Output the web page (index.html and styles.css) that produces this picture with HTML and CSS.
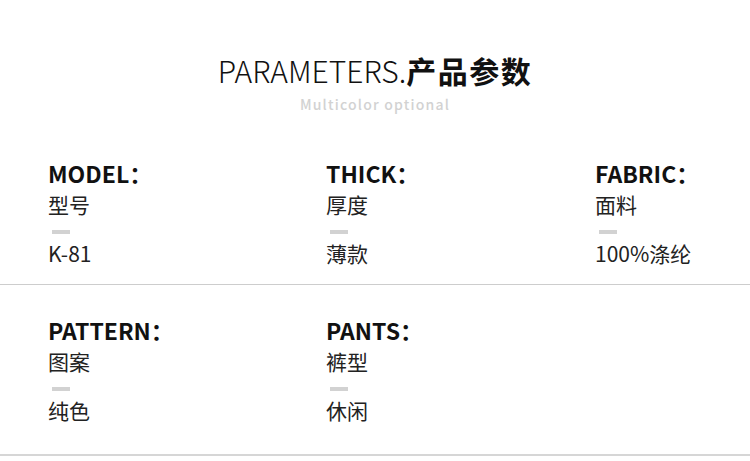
FILE: index.html
```html
<!DOCTYPE html>
<html lang="zh-CN">
<head>
<meta charset="utf-8">
<title>Parameters</title>
<link rel="stylesheet" href="styles.css">
</head>
<body>
<div class="page">
  <header class="head">
    <h1 class="title"><span class="title-en">PARAMETERS.</span><span class="title-cn">产品参数</span></h1>
    <p class="subtitle">Multicolor optional</p>
  </header>

  <section class="row row-first">
    <div class="item">
      <div class="label">MODEL：</div>
      <div class="cn">型号</div>
      <div class="dash"></div>
      <div class="value">K-81</div>
    </div>
    <div class="item">
      <div class="label">THICK：</div>
      <div class="cn">厚度</div>
      <div class="dash"></div>
      <div class="value">薄款</div>
    </div>
    <div class="item">
      <div class="label">FABRIC：</div>
      <div class="cn">面料</div>
      <div class="dash"></div>
      <div class="value">100%涤纶</div>
    </div>
  </section>
  <div class="rule"></div>

  <section class="row row-second">
    <div class="item">
      <div class="label">PATTERN：</div>
      <div class="cn">图案</div>
      <div class="dash"></div>
      <div class="value">纯色</div>
    </div>
    <div class="item">
      <div class="label">PANTS：</div>
      <div class="cn">裤型</div>
      <div class="dash"></div>
      <div class="value">休闲</div>
    </div>
  </section>
  <div class="rule rule-bottom"></div>
</div>
</body>
</html>
```

FILE: styles.css
```css
* { box-sizing: border-box; }
html, body {
  margin: 0;
  padding: 0;
  background: #ffffff;
}
body {
  font-family: "Noto Sans CJK SC", "Noto Sans", sans-serif;
  color: #111;
}
.page {
  width: 750px;
  height: 461px;
  overflow: hidden;
}
.head {
  padding-top: 55px;
  display: flex;
  flex-direction: column;
  align-items: center;
}
.title {
  margin: 0;
  font-size: 30px;
  line-height: 30px;
  font-weight: 300;
  color: #111;
  white-space: nowrap;
}
.title-en {
  font-weight: 300;
}
.title-cn {
  font-weight: 700;
  letter-spacing: 1.5px;
}
.subtitle {
  margin: 11px 0 0;
  font-size: 14px;
  line-height: 16px;
  font-weight: 500;
  letter-spacing: 1.2px;
  color: #d2d2d2;
}
.row {
  display: grid;
  grid-template-columns: 278px 269px 1fr;
  padding-left: 48px;
}
.row-first {
  margin-top: 46px;
}
.row-second {
  margin-top: 30px;
}
.item {
  display: flex;
  flex-direction: column;
  align-items: flex-start;
}
.label {
  font-size: 23px;
  line-height: 31px;
  font-weight: 700;
  color: #111;
  white-space: nowrap;
}
.cn {
  margin-top: 1px;
  font-size: 21px;
  line-height: 28px;
  font-weight: 400;
  color: #222;
}
.dash {
  margin-top: 12px;
  margin-left: 4px;
  width: 18px;
  height: 4px;
  background: #d2d2d2;
}
.value {
  margin-top: 5px;
  font-size: 21px;
  line-height: 28px;
  font-weight: 400;
  color: #222;
  white-space: nowrap;
}
.rule {
  margin-top: 17px;
  height: 1px;
  background: #cdcdcd;
}
.rule-bottom {
  margin-top: 30px;
  height: 2px;
  background: #d6d6d6;
}
```
